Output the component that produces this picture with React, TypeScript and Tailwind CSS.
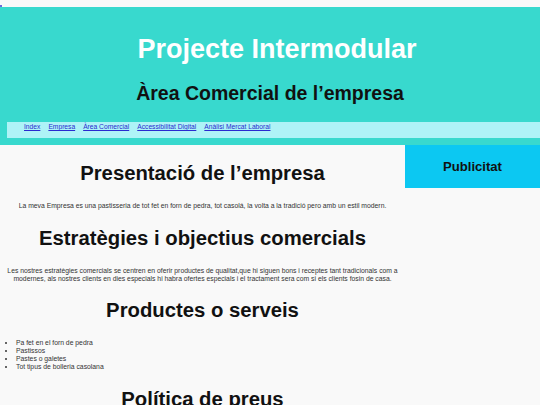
import React from 'react';

const links = ['Index', 'Empresa', 'Àrea Comercial', 'Accessibilitat Digital', 'Anàlisi Mercat Laboral'];

const productes = [
  'Pa fet en el forn de pedra',
  'Pastissos',
  'Pastes o galetes',
  'Tot tipus de bolleria casolana',
];

const Heading = ({ children }: { children: React.ReactNode }) => (
  <h2 className="my-[17px] text-center text-[20.3px] font-bold leading-[23px] text-[#111]">{children}</h2>
);

export default function App() {
  return (
    <div className="h-[405px] w-[540px] overflow-hidden bg-[#f9f9f9] font-['Liberation_Sans',Arial,sans-serif]">
      <div className="relative h-[7px]">
        <span className="absolute left-0 top-[5px] h-[2px] w-[2px] bg-[#6b6bd8]" />
      </div>

      <header className="bg-[#38d9ce] pt-[27px] pb-[7px]">
        <h1 className="pl-[14px] text-center text-[27px] font-bold leading-[31px] text-white">Projecte Intermodular</h1>
        <h2 className="mt-[17px] text-center text-[19.5px] font-bold leading-[22px] text-[#111]">
          Àrea Comercial de l’empresa
        </h2>
        <nav className="mt-[18px] ml-[7px] h-[16px] bg-[#aef3f7] pl-[17px]">
          <ul className="flex gap-[8px] pt-[1px] text-[6.7px] leading-[8px]">
            {links.map((l) => (
              <li key={l}>
                <a href="#" className="text-[#2a2ad0] underline">
                  {l}
                </a>
              </li>
            ))}
          </ul>
        </nav>
      </header>

      <div className="flex">
        <main className="w-[405px] shrink-0 text-[6.8px] leading-[7.8px] text-[#333]">
          <Heading>Presentació de l’empresa</Heading>
          <p className="my-[16px] text-center">
            La meva Empresa es una pastisseria de tot fet en forn de pedra, tot casolá, la volta a la tradició pero amb un
            estil modern.
          </p>

          <Heading>Estratègies i objectius comercials</Heading>
          <p className="my-[16px] px-[6px] text-center">
            Les nostres estratègies comercials se centren en oferir productes de qualitat,que hi siguen bons i receptes tant
            tradicionals com a modernes, als nostres clients en dies especials hi habra ofertes especials i el tractament sera
            com si els clients fosin de casa.
          </p>

          <Heading>Productes o serveis</Heading>
          <ul className="my-[16px] list-disc pl-[16px]">
            {productes.map((p) => (
              <li key={p}>{p}</li>
            ))}
          </ul>

          <Heading>Política de preus</Heading>
        </main>

        <aside className="flex-1">
          <div className="flex h-[43px] items-center justify-center bg-[#0cc8f2]">
            <h3 className="text-[13.1px] font-bold text-[#111]">Publicitat</h3>
          </div>
        </aside>
      </div>
    </div>
  );
}
